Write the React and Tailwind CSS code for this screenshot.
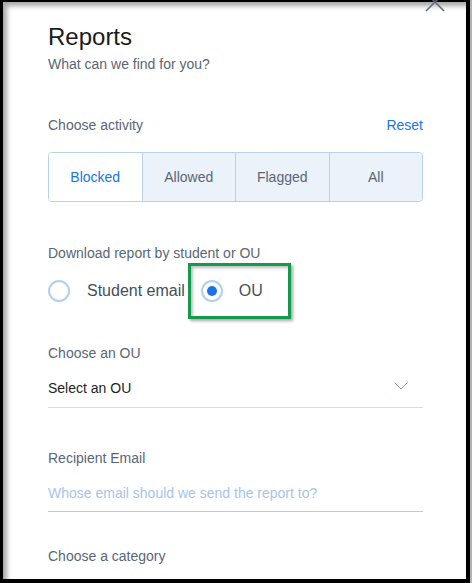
import React from "react";

function Radio({ checked }) {
  return (
    <span className="flex h-[22px] w-[22px] shrink-0 items-center justify-center rounded-full border-2 border-[#b3cff0] bg-white">
      {checked && <span className="h-[10px] w-[10px] rounded-full bg-[#1a73e8]" />}
    </span>
  );
}

export default function App() {
  const segs = ["Blocked", "Allowed", "Flagged", "All"];
  return (
    <div
      className="relative h-[583px] w-[472px] overflow-hidden bg-black pt-[2px] pl-[3px] pr-[6px] pb-[4px]"
      style={{ fontFamily: '"Liberation Sans", Arial, sans-serif' }}
    >
      <div className="absolute right-0 top-0 h-full w-[2px] bg-[#b4b4b4]" />
      <div className="relative h-full bg-white pl-[45px] pr-[43px] pt-[21px] shadow-[inset_4px_4px_5px_rgba(0,0,0,0.35)]">
        <svg
          className="absolute left-[422px] top-[-10px]"
          width="20"
          height="20"
          viewBox="0 0 20 20"
          fill="none"
          stroke="#5d6b7a"
          strokeWidth="1.5"
        >
          <path d="M1 1 L19 19 M19 1 L1 19" />
        </svg>

        <h1 className="text-[24px] leading-[28px] text-[#1b1b1b]">Reports</h1>
        <p className="mt-[5px] text-[14px] leading-[16px] text-[#5a6674]">What can we find for you?</p>

        <div className="mt-[45px] flex items-center justify-between text-[14px] leading-[16px]">
          <span className="text-[#5a6674]">Choose activity</span>
          <span className="text-[#1a73e8]">Reset</span>
        </div>

        <div className="mt-[19px] flex h-[50px] overflow-hidden rounded-[4px] border border-[#b9d2ec]">
          {segs.map((s, i) => (
            <div
              key={s}
              className={
                "flex flex-1 items-center justify-center text-[14px] " +
                (i > 0 ? "border-l border-[#b9d2ec] " : "") +
                (i === 0 ? "bg-white text-[#1a73e8]" : "bg-[#ebf2fa] text-[#5a6674]")
              }
            >
              {s}
            </div>
          ))}
        </div>

        <p className="mt-[43px] text-[14px] leading-[16px] text-[#5a6674]">Download report by student or OU</p>

        <div className="mt-[19px] flex h-[22px] items-center">
          <Radio />
          <span className="ml-[17px] text-[16px] text-[#454f5a]">Student email</span>
          <div className="relative ml-[16px] flex items-center">
            <div className="absolute left-[-13px] top-[-16px] h-[56px] w-[103px] border-[3px] border-[#15994c] shadow-[2px_2px_3px_rgba(0,0,0,0.35),inset_2px_2px_3px_rgba(0,0,0,0.25)]" />
            <Radio checked />
            <span className="ml-[16px] text-[16px] text-[#454f5a]">OU</span>
          </div>
        </div>

        <p className="mt-[43px] text-[14px] leading-[16px] text-[#5a6674]">Choose an OU</p>
        <div className="mt-[19px] flex items-start justify-between border-b border-[#d5dfea] pb-[11px]">
          <span className="text-[14px] leading-[16px] text-[#1e1e1e]">Select an OU</span>
          <svg className="mr-[15px] mt-[2px]" width="14" height="8" viewBox="0 0 14 8" fill="none" stroke="#8d9bab" strokeWidth="1">
            <path d="M0.5 0.5 L7 7 L13.5 0.5" />
          </svg>
        </div>

        <p className="mt-[42px] text-[14px] leading-[16px] text-[#5a6674]">Recipient Email</p>
        <div className="mt-[19px] border-b border-[#b9cde2] pb-[10px] text-[14px] leading-[16px] text-[#a9c3e6]">
          Whose email should we send the report to?
        </div>

        <p className="mt-[36px] text-[14px] leading-[16px] text-[#5a6674]">Choose a category</p>
      </div>
    </div>
  );
}
